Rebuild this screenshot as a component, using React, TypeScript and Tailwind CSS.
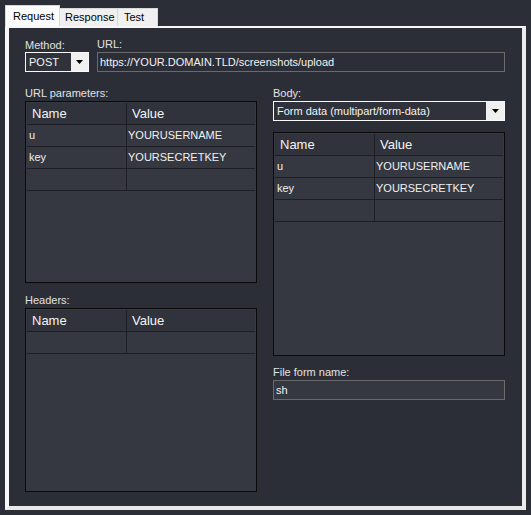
import React from "react";

const font = { fontFamily: '"Liberation Sans", Arial, sans-serif' };

type Row = [string, string];

function DropArrow() {
  return (
    <svg width="7" height="4" viewBox="0 0 7 4" className="block">
      <path d="M0 0h7L3.5 4z" fill="#000" />
    </svg>
  );
}

function Combo({ value, wide }: { value: string; wide?: boolean }) {
  return (
    <div className="flex h-[20px] border border-[#f8f8f8] bg-[#2f323b]">
      <div className="flex flex-1 items-center pl-[3px] text-[11px] text-[#f2f2f2]">
        {value}
      </div>
      <div
        className={`flex items-center justify-center bg-[#f0f0f0] ${
          wide ? "w-[18px]" : "w-[17px]"
        }`}
      >
        <DropArrow />
      </div>
    </div>
  );
}

function Grid({ rows, height }: { rows: Row[]; height: string }) {
  const all: Row[] = [...rows, ["", ""]];
  return (
    <div className={`border border-[#0a0a0a] bg-[#353841] p-px ${height}`}>
      <div className="flex h-[22px] border-b border-[#1d1f24] bg-[#30333b] text-[13px] text-[#f4f4f4]">
        <div className="flex w-[100px] items-center border-r border-[#1d1f24] pl-[5px]">
          Name
        </div>
        <div className="flex flex-1 items-center pl-[5px]">Value</div>
      </div>
      {all.map(([k, v], i) => (
        <div
          key={i}
          className="flex h-[22px] border-b border-[#1d1f24] text-[11px] text-[#f0f0f0]"
        >
          <div className="flex w-[100px] items-center border-r border-[#1d1f24] pl-[2px]">
            {k}
          </div>
          <div className="flex flex-1 items-center pl-[1px]">{v}</div>
        </div>
      ))}
    </div>
  );
}

const params: Row[] = [
  ["u", "YOURUSERNAME"],
  ["key", "YOURSECRETKEY"],
];

export default function App() {
  return (
    <div
      className="h-[515px] w-[531px] overflow-hidden bg-[#2b2e37] pl-[5px] pt-[5px]"
      style={font}
    >
      {/* Tabs */}
      <div className="flex h-[21px] items-end text-[11px] text-black">
        <div className="flex h-[21px] w-[55px] items-center border border-b-0 border-[#d9d9d9] bg-[#fcfcfc] pl-[7px]">
          Request
        </div>
        <div className="flex h-[18px] w-[58px] items-center border-t border-r border-[#d9d9d9] bg-[#f0f0f0] pl-[5px]">
          Response
        </div>
        <div className="flex h-[18px] w-[40px] items-center border-t border-r border-[#d9d9d9] bg-[#f0f0f0] pl-[6px]">
          Test
        </div>
      </div>

      {/* Tab page */}
      <div className="h-[484px] w-[521px] border-t-2 border-b-4 border-l-4 border-r-4 border-[#f7f7f7] border-r-[#ececec] border-b-[#e8e8e8] bg-[#2b2e37]">
        <div className="pl-[16px] pr-[17px] pt-[8px] text-[11px] text-[#e2e2e2]">
          {/* Method + URL */}
          <div className="flex gap-[8px]">
            <div className="w-[64px]">
              <div className="h-[16px] pt-[1px]">Method:</div>
              <Combo value="POST" />
            </div>
            <div className="flex-1">
              <div className="h-[16px]">URL:</div>
              <div className="flex h-[20px] items-center border border-[#6a6a6a] pl-[2px] text-[#f2f2f2]">
                https://YOUR.DOMAIN.TLD/screenshots/upload
              </div>
            </div>
          </div>

          <div className="mt-[13px] flex gap-[16px]">
            {/* Left column */}
            <div className="w-[232px]">
              <div className="flex h-[16px] items-center">URL parameters:</div>
              <Grid rows={params} height="h-[182px]" />
              <div className="mt-[9px] flex h-[16px] items-center">Headers:</div>
              <Grid rows={[]} height="h-[184px]" />
            </div>

            {/* Right column */}
            <div className="w-[232px]">
              <div className="flex h-[16px] items-center">Body:</div>
              <Combo value="Form data (multipart/form-data)" wide />
              <div className="mt-[11px]">
                <Grid rows={params} height="h-[224px]" />
              </div>
              <div className="mt-[8px] flex h-[16px] items-center">File form name:</div>
              <div className="flex h-[20px] items-center border border-[#6a6a6a] bg-[#353841] pl-[2px] text-[#f2f2f2]">
                sh
              </div>
            </div>
          </div>
        </div>
      </div>
    </div>
  );
}
